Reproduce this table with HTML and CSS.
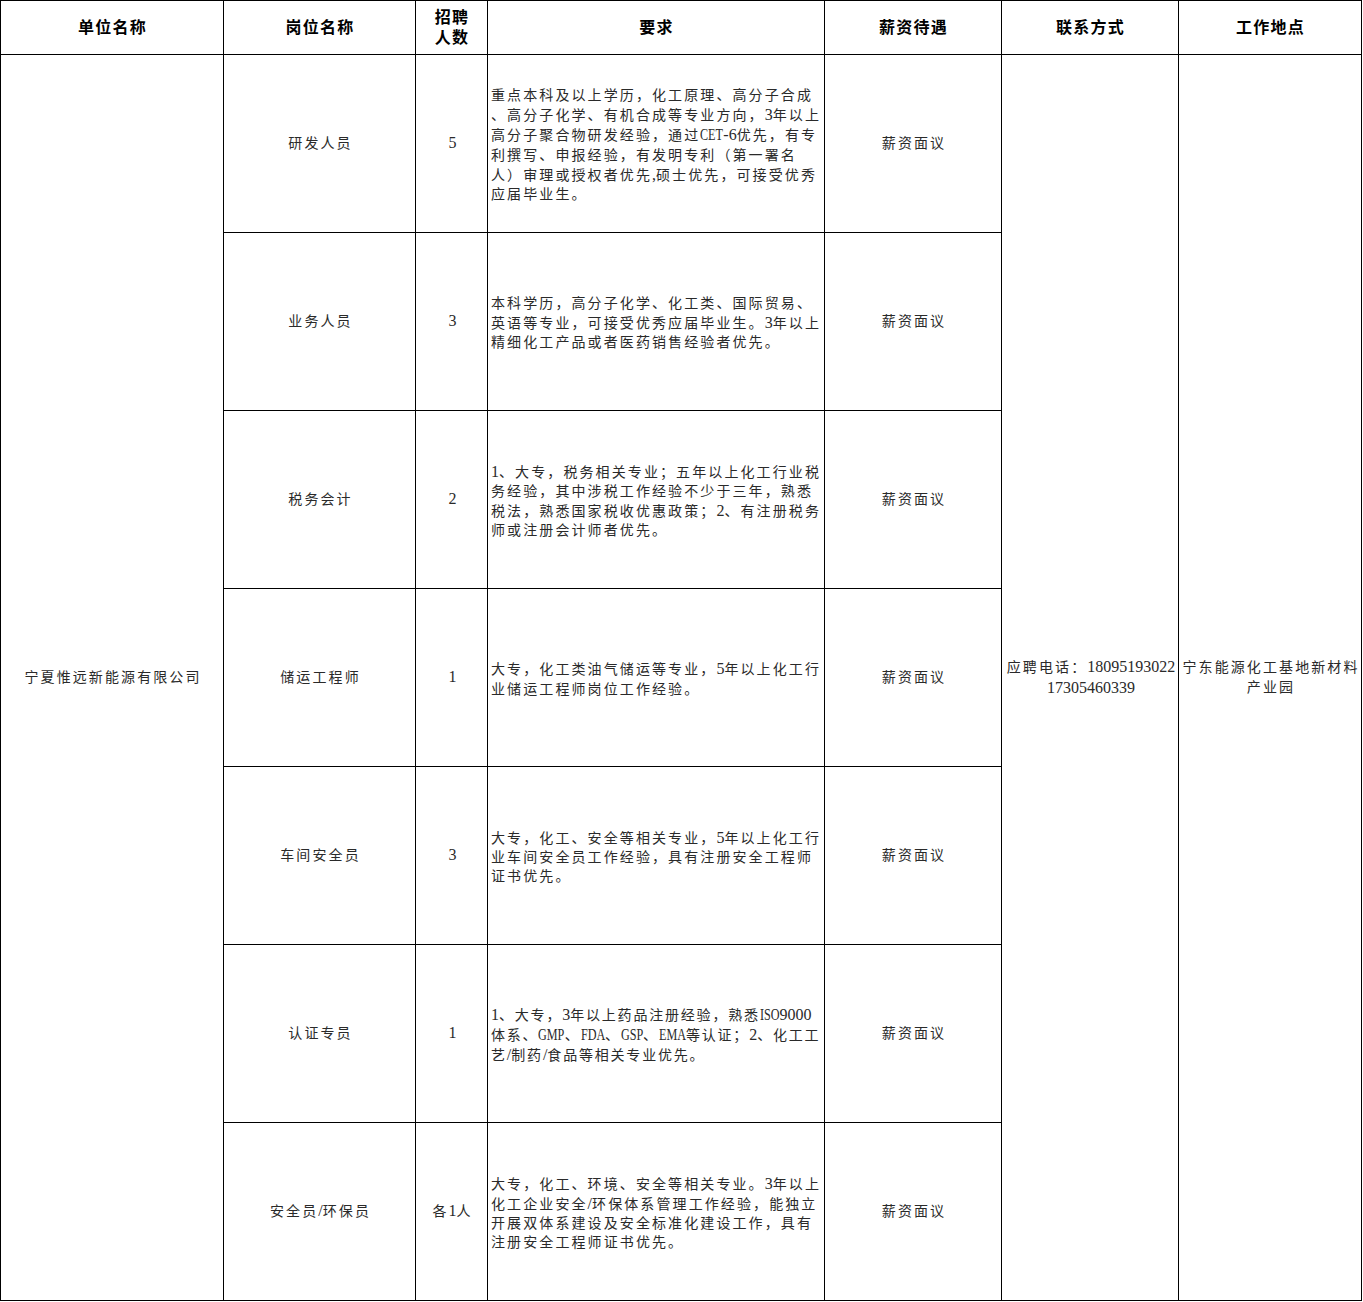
FILE: index.html
```html
<!DOCTYPE html>
<html lang="zh-CN">
<head>
<meta charset="utf-8">
<title>招聘信息</title>
<link rel="stylesheet" href="styles.css">
</head>
<body>
<div class="sheet">
  <div class="cell head"><div>单位名称</div></div>
  <div class="cell head"><div>岗位名称</div></div>
  <div class="cell head head2"><div>招聘<br>人数</div></div>
  <div class="cell head"><div>要求</div></div>
  <div class="cell head"><div>薪资待遇</div></div>
  <div class="cell head"><div>联系方式</div></div>
  <div class="cell head"><div>工作地点</div></div>

  <div class="cell span-all c1"><div>宁夏惟远新能源有限公司</div></div>

  <div class="cell"><div>研发人员</div></div>
  <div class="cell num"><div><span class="l">5</span></div></div>
  <div class="cell req"><div>重点本科及以上学历，化工原理、高分子合成<br>、高分子化学、有机合成等专业方向，<span class="l">3</span>年以上<br>高分子聚合物研发经验，通过<span class="u w-cet">CET</span><span class="l">-6</span>优先，有专<br>利撰写、申报经验，有发明专利（第一署名<br>人）审理或授权者优先<span class="l">,</span>硕士优先，可接受优秀<br>应届毕业生。</div></div>
  <div class="cell"><div>薪资面议</div></div>

  <div class="cell span-all c6"><div>应聘电话：<span class="l">18095193022</span><br><span class="l">17305460339</span></div></div>
  <div class="cell span-all c7"><div>宁东能源化工基地新材料<br>产业园</div></div>

  <div class="cell"><div>业务人员</div></div>
  <div class="cell num"><div><span class="l">3</span></div></div>
  <div class="cell req"><div>本科学历，高分子化学、化工类、国际贸易、<br>英语等专业，可接受优秀应届毕业生。<span class="l">3</span>年以上<br>精细化工产品或者医药销售经验者优先。</div></div>
  <div class="cell"><div>薪资面议</div></div>

  <div class="cell"><div>税务会计</div></div>
  <div class="cell num"><div><span class="l">2</span></div></div>
  <div class="cell req"><div><span class="l">1</span>、大专，税务相关专业；五年以上化工行业税<br>务经验，其中涉税工作经验不少于三年，熟悉<br>税法，熟悉国家税收优惠政策；<span class="l">2</span>、有注册税务<br>师或注册会计师者优先。</div></div>
  <div class="cell"><div>薪资面议</div></div>

  <div class="cell"><div>储运工程师</div></div>
  <div class="cell num"><div><span class="l">1</span></div></div>
  <div class="cell req"><div>大专，化工类油气储运等专业，<span class="l">5</span>年以上化工行<br>业储运工程师岗位工作经验。</div></div>
  <div class="cell"><div>薪资面议</div></div>

  <div class="cell"><div>车间安全员</div></div>
  <div class="cell num"><div><span class="l">3</span></div></div>
  <div class="cell req"><div>大专，化工、安全等相关专业，<span class="l">5</span>年以上化工行<br>业车间安全员工作经验，具有注册安全工程师<br>证书优先。</div></div>
  <div class="cell"><div>薪资面议</div></div>

  <div class="cell"><div>认证专员</div></div>
  <div class="cell num"><div><span class="l">1</span></div></div>
  <div class="cell req tight"><div><span class="l">1</span>、大专，<span class="l">3</span>年以上药品注册经验，熟悉<span class="u w-iso">ISO</span><span class="l">9000</span><br>体系、<span class="u w-gmp">GMP</span>、<span class="u w-fda">FDA</span>、<span class="u w-gsp">GSP</span>、<span class="u w-ema">EMA</span>等认证；<span class="l">2</span>、化工工<br>艺<span class="l">/</span>制药<span class="l">/</span>食品等相关专业优先。</div></div>
  <div class="cell"><div>薪资面议</div></div>

  <div class="cell"><div>安全员<span class="l">/</span>环保员</div></div>
  <div class="cell num"><div>各<span class="l">1</span>人</div></div>
  <div class="cell req"><div>大专，化工、环境、安全等相关专业。<span class="l">3</span>年以上<br>化工企业安全<span class="l">/</span>环保体系管理工作经验，能独立<br>开展双体系建设及安全标准化建设工作，具有<br>注册安全工程师证书优先。</div></div>
  <div class="cell"><div>薪资面议</div></div>
</div>
</body>
</html>
```

FILE: styles.css
```css
html, body {
  margin: 0;
  padding: 0;
  background: #ffffff;
}

body {
  font-family: "Liberation Serif", "Noto Sans CJK SC", serif;
}

.sheet {
  display: grid;
  grid-template-columns: 222px 191px 71px 336px 176px 176px 182px;
  grid-template-rows: 53px repeat(7, 177px);
  gap: 1px;
  padding: 1px;
  background: #000000;
  width: max-content;
}

.cell {
  background: #ffffff;
  display: flex;
  align-items: center;
  justify-content: center;
  text-align: center;
  font-size: 14px;
  line-height: 19.2px;
  letter-spacing: 2.1px;
  color: #2a2a2a;
  white-space: nowrap;
  padding-left: 2px;
  box-sizing: border-box;
  overflow: hidden;
}

.head {
  font-size: 16px;
  font-weight: 700;
  letter-spacing: 1.3px;
  color: #000000;
  padding-left: 1px;
}

.head2 {
  line-height: 20px;
}

.span-all {
  grid-row: 2 / span 7;
}

.c1 { grid-column: 1; }
.c6 { grid-column: 6; }
.c7 { grid-column: 7; }

.req {
  justify-content: flex-start;
  text-align: left;
  padding-left: 3px;
  padding-top: 3px;
}

.tight {
  letter-spacing: 1.8px;
}

.l {
  font-family: "Liberation Serif", serif;
  font-size: 16px;
  letter-spacing: 0;
}

/* condensed capitals, imitating the narrow half-width Latin of the sheet */
.u {
  --w: 30px;
  display: inline-block;
  font-family: "Liberation Serif", serif;
  font-size: 16px;
  letter-spacing: 0;
  transform: scaleX(0.76);
  transform-origin: 0 50%;
  margin-right: calc(var(--w) * -0.24);
}

.w-cet { --w: 30.2px; }
.w-iso { --w: 25.8px; }
.w-gmp { --w: 34.7px; }
.w-fda { --w: 32px; }
.w-gsp { --w: 29.3px; }
.w-ema { --w: 35.6px; }
```
